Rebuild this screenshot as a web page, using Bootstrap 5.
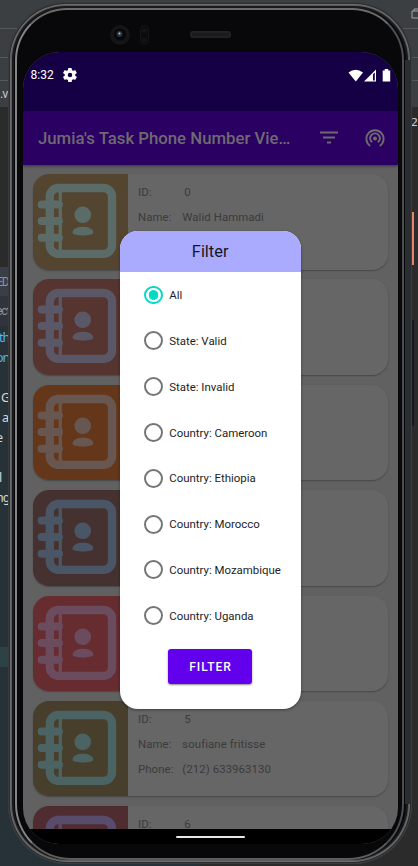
<!DOCTYPE html>
<html lang="en">
<head>
<meta charset="utf-8">
<meta name="viewport" content="width=device-width, initial-scale=1">
<title>Phone Number Viewer</title>
<link href="https://cdn.jsdelivr.net/npm/bootstrap@5.3.0/dist/css/bootstrap.min.css" rel="stylesheet">
<style>
body{width:418px;height:866px;background:#2b2b2b;font-family:Roboto,sans-serif;line-height:1}
.desk{inset:0}
.side-l{width:200px;white-space:nowrap}
.side-r{width:218px}
.tools{height:107px;background:#3c3f41}
.tools div{border-bottom:1px solid #555759}
.code{font:12.5px/20px "Noto Sans","DejaVu Sans",sans-serif;background:#263238;color:#d5dade}
.code span,.tab span,.tools span{display:block;white-space:nowrap;letter-spacing:-1px}
.phone{margin:2px 6px 0 8px;width:404px;height:862px;border-radius:58px 58px 60px 60px;background:#08080a;
 box-shadow:inset 0 0 0 1px #3a3c3e,inset 0 0 0 2px #2a2c2e,inset 0 0 0 3px #6c6e70,inset 0 0 0 4px #56585a,inset 0 0 0 6px #18191b;padding:0 13px 0 15px}
.phone::before{content:"";position:absolute;inset:6px 8px 4px 7px;border:2.5px solid;border-color:#6c6d6a #4c4f51 #5e5c5a #858585;border-radius:52px 52px 56px 56px}
.phone::after{content:"";position:absolute;right:1px;top:58px;bottom:60px;width:6px;background:#2a2e30}
.phone-top{height:50px}
.screen{width:375px;height:792px;border-radius:37px 37px 36px 36px;background:#616161}
.status{height:59px;background:#150046;color:#fff;font-size:12px;padding:17px 6.5px 0 7.5px}
.appbar{height:53.5px;background:#2a0062;color:#6e6a70;padding:0 12px 0 15px;box-shadow:0 1px 3px #0007}
.appbar .ttl{font-size:16.750px;font-weight:500;width:272px;padding-top:2px}
.appbar svg{margin-top:1px}
.feed{height:664.5px;padding:9.5px 10px 0 9.5px;gap:9.9px}
.entry{height:95.5px;border-radius:16px;background:#666;box-shadow:0 1px 1.5px #0004;color:#3b3b3b;font-size:11.4px}
.entry svg{width:95.5px;height:95.5px}
.entry .rows{padding:12.600px 0 0 10px;gap:13.7px;letter-spacing:.08px}
.entry .k{width:44.300px}
.navbar-sys{height:15px;background:#000}
.pill-sys{width:69px;height:2px;background:#e8e8e8;border-radius:1px}
.dlg{left:119.5px;top:230.5px;width:181.3px;height:478px;border-radius:18px;background:#fff;box-shadow:0 1px 3px #0006;color:#1e1e1e}
.dlg-h{height:41px;background:#aaaaff;font-size:16.4px;color:#16161f;padding-top:2.500px}
.opts{padding:14px 0 0 24.8px;gap:26.95px}
.opt{height:18.9px;gap:6px;font-size:11.45px}
.opt b{font-weight:400;padding-top:1.800px}
.dot{width:18.9px;height:18.9px;border:2px solid #757575;border-radius:50%}
.opt.on .dot{border-color:#03dac5;background:radial-gradient(circle,#03dac5 4.5px,transparent 5.1px)}
.go{width:84px;height:34.5px;margin:24px 0 0 48.5px;background:#6200ee;border-radius:3px;color:#fff;font-size:12px;font-weight:500;letter-spacing:1px;box-shadow:0 1px 2px #0007}
.btn-label{padding:1px 0 0 1px}
.key{width:3px;left:411px}
</style>
<script src="https://cdn.jsdelivr.net/npm/bootstrap@5.3.0/dist/js/bootstrap.bundle.min.js"></script>
</head>
<body class="position-relative overflow-hidden m-0">
<svg class="d-none">
 <symbol id="book" viewBox="0 0 287 286">
  <rect x="50.5" y="41.500" width="187" height="198" rx="26" fill="none" stroke="currentColor" stroke-width="25"/>
  <path d="M82 42v198" stroke="currentColor" stroke-width="10"/>
  <path d="M26 91h52M26 141h52M26 191h52" stroke="currentColor" stroke-width="24" stroke-linecap="round"/>
  <circle cx="149.500" cy="122" r="25" fill="currentColor"/>
  <path d="M119 176c0-24 62-24 62 0 0 11-62 11-62 0z" fill="currentColor"/>
 </symbol>
</svg>

<div class="desk position-absolute d-flex">
 <div class="side-l">
  <div class="tools"><div style="height:29px"></div><div style="height:29px"></div><div style="height:23px"></div><span style="padding-top:7px;color:#c9cccf;font-size:12.500px">.v</span></div>
  <div style="height:160px"></div>
  <div class="tab" style="height:29px;background:#3a3e49;color:#8f949c;font-size:12px;padding-top:9px"><span style="margin-left:-4px">ED</span></div>
  <div class="tab" style="height:30px;background:#31343c;color:#8f949c;font-size:12px;padding-top:9px"><span style="margin-left:-4px">ect</span></div>
  <div class="code" style="height:321px;padding-top:2px"><span style="color:#56b6f0;margin-left:-1px">th</span><span style="color:#56b6f0;margin-left:-4px">on</span><span>&nbsp;</span><span style="padding-left:1px">G</span><span style="padding-left:2px">a</span><span style="margin-left:-4px">e</span><span>&nbsp;</span><span style="margin-left:-1px">l</span><span style="margin-left:-4px">ng</span></div>
  <div style="height:20px;background:#2c4246"></div>
  <div style="height:199px;background:#263238"></div>
 </div>
 <div class="side-r">
  <div class="tools"><div style="height:29px"><svg class="d-block ms-auto" width="14" height="20"><path d="M8 11h8v7H8zM10 11V9h6" fill="none" stroke="#a2a5a7"/></svg></div><div style="height:29px"></div><div style="height:23px"></div></div>
  <div class="text-end" style="font:11px 'DejaVu Sans',sans-serif;color:#ccc;padding-top:9px">2</div>
 </div>
</div>
<div class="key position-absolute" style="top:212px;height:53px;background:#e5826e"></div>
<div class="key position-absolute" style="top:320px;height:106px;background:#17191a"></div>

<main class="phone position-relative">
 <div class="phone-top">
  <svg width="375" height="50" class="d-block">
   <circle cx="97" cy="33" r="10" fill="#151517"/><circle cx="97" cy="32.500" r="6" fill="#060709"/><circle cx="96.500" cy="32" r="3" fill="#26343e"/><circle cx="96.500" cy="31.500" r="1" fill="#c5ccd0"/>
   <rect x="117.500" y="23.500" width="8" height="19" rx="4" fill="#0b0b0c" stroke="#161618"/><circle cx="121.500" cy="28.500" r="2.500" fill="#131315"/><circle cx="121.500" cy="38" r="2.500" fill="#131315"/>
   <rect x="167" y="29" width="41" height="7" rx="3" fill="#222"/><rect x="169" y="31" width="37" height="3" rx="1" fill="#1b1b1b"/>
  </svg>
 </div>
 <div class="screen overflow-hidden d-flex flex-column">
  <div class="status d-flex justify-content-between align-items-start flex-shrink-0">
   <div class="d-flex"><span>8:32</span>
    <svg width="14" height="14" viewBox="2 2 20 20" style="margin:-1px 0 0 9px"><path fill="#fff" fill-rule="evenodd" d="M19.400 13a7 7 0 0 0 0-2l2.100-1.600a.5.5 0 0 0 .1-.6l-2-3.500a.5.5 0 0 0-.6-.2l-2.500 1a7 7 0 0 0-1.700-1l-.4-2.600a.5.5 0 0 0-.5-.5h-4a.5.5 0 0 0-.5.500L9 5.100a7 7 0 0 0-1.700 1l-2.500-1a.5.5 0 0 0-.6.200l-2 3.500a.5.5 0 0 0 .1.600L4.500 11a7 7 0 0 0 0 2l-2.200 1.600a.5.5 0 0 0-.1.600l2 3.500c.1.200.4.300.6.200l2.500-1a7 7 0 0 0 1.700 1l.4 2.600c0 .3.200.5.5.500h4c.3 0 .5-.2.5-.5l.4-2.600a7 7 0 0 0 1.700-1l2.500 1c.2.100.5 0 .6-.2l2-3.500a.5.5 0 0 0-.1-.6zM12 15.200a3.200 3.200 0 1 1 0-6.400 3.200 3.200 0 0 1 0 6.400z"/></svg>
   </div>
   <svg width="44" height="14" viewBox="0 0 44 14" style="margin-top:-.5px"><path d="M.5 3.500Q7.500-2 15 3.500L7.800 12.500z" fill="#fff"/><path d="M16 12.500L28 .5v12z" fill="#fff"/><path d="M25 5.200l1.800-1.800v8H25z" fill="#150046"/><path d="M34.700 1.500h2V0h3.500v1.500h2v11h-7.500z" fill="#fff"/></svg>
  </div>
  <header class="appbar d-flex align-items-center flex-shrink-0 position-relative">
   <div class="ttl text-nowrap flex-shrink-0">Jumia's Task Phone Number Vie…</div>
   <svg class="flex-shrink-0" width="76" height="24" viewBox="0 0 76 24" fill="none" stroke="#6e6a70"><path d="M10 6.500h18M13 11.500h12M17 16.500h4" stroke-width="1.800"/>
    <g stroke-width="1.900"><path d="M60.200 20a8.600 8.600 0 1 1 9.600 0M62.200 16.300a4.900 4.900 0 1 1 5.600 0"/></g><circle cx="65" cy="12.500" r="2" fill="#6e6a70" stroke="none"/></svg>
  </header>
  <section class="feed d-flex flex-column overflow-hidden flex-shrink-0" id="feed"></section>
  <div class="navbar-sys flex-shrink-0 d-flex justify-content-center"><div class="pill-sys" style="margin-top:7px"></div></div>
 </div>
</main>

<div class="dlg position-absolute overflow-hidden" role="dialog">
 <div class="dlg-h d-flex align-items-center justify-content-center">Filter</div>
 <div class="opts d-flex flex-column" id="opts"></div>
 <button class="go border-0 p-0 d-block"><span class="btn-label d-block">FILTER</span></button>
</div>
<script>
const people=[
 ['#544530','#5a6b68',0,'Walid Hammadi',''],
 ['#56342f','#5a5866',1,'',''],['#64371b','#685751',2,'',''],['#453230','#4a5665',3,'',''],['#662c30','#6a4c5e',4,'',''],
 ['#473f2c','#4b6463',5,'soufiane fritisse','(212) 633963130'],['#4f2c30','#574c6b',6,'','']];
feed.innerHTML=people.map(([b,c,id,n,p])=>`<article class="entry d-flex overflow-hidden flex-shrink-0"><svg class="flex-shrink-0" style="background:${b};color:${c}"><use href="#book"/></svg>
<div class="rows d-flex flex-column">${n||id==6?`<div class="d-flex"><span class="k">ID:</span><span class="ps-1" style="margin-left:-2px">${id}</span></div>`:''}${n?`<div class="d-flex text-nowrap"><span class="k">Name:</span>${n}</div>`:''}${p?`<div class="d-flex text-nowrap"><span class="k">Phone:</span>${p}</div>`:''}</div></article>`).join('');
opts.innerHTML=['All','State: Valid','State: Invalid','Country: Cameroon','Country: Ethiopia','Country: Morocco','Country: Mozambique','Country: Uganda'].map((t,i)=>`<label class="opt d-flex align-items-center${i?'':' on'}"><span class="dot"></span><b>${t}</b></label>`).join('');
</script>
</body>
</html>
